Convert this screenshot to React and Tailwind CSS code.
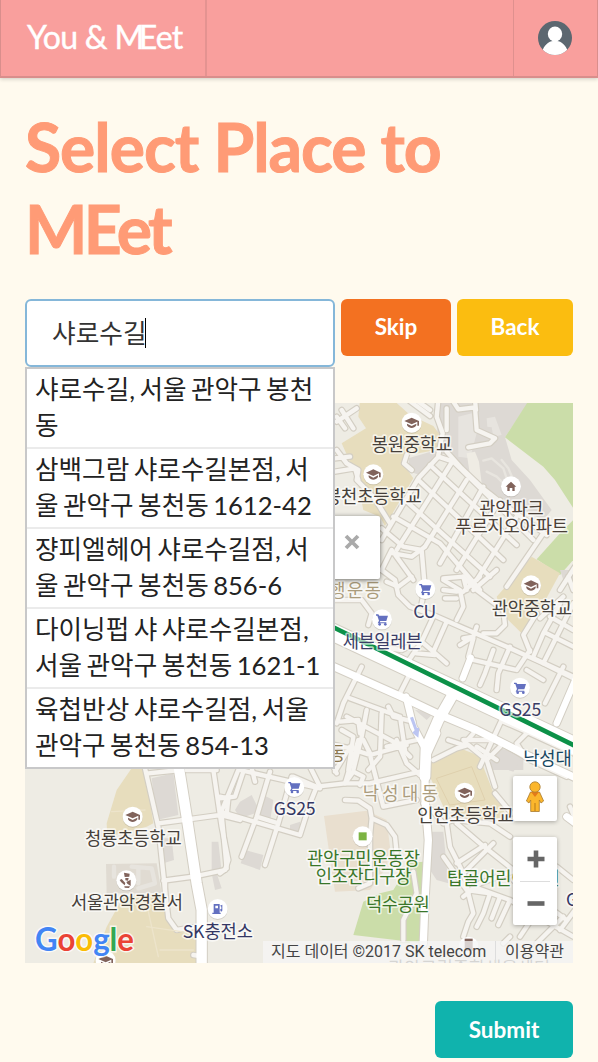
import React from "react";

const KR = '"Noto Sans CJK KR", sans-serif';

const suggestions = [
  ["샤로수길, 서울 관악구 봉천", "동"],
  ["삼백그람 샤로수길본점, 서", "울 관악구 봉천동 1612-42"],
  ["쟝피엘헤어 샤로수길점, 서", "울 관악구 봉천동 856-6"],
  ["다이닝펍 샤 샤로수길본점,", "서울 관악구 봉천동 1621-1"],
  ["육첩반상 샤로수길점, 서울", "관악구 봉천동 854-13"],
];

// Map tiles are drawn at three times their display size, each from its own origin.
const tiles = {
  north: "translate(330 400) scale(0.33333)",
  middle: "translate(330 570) scale(0.33333)",
  west: "translate(20 760) scale(0.33333)",
  south: "translate(220 740) scale(0.33333)",
  east: "translate(400 740) scale(0.33333)",
};

// [tile, fill, points]
const areas = [
  ["north", "#ddd9d4", "325,0 600,0 525,112 545,180 600,240 665,330 640,360 560,320 460,262 420,220 350,160 325,165 270,225 240,215 235,175 320,150"],
  ["north", "#e7e4df", "385,50 425,40 440,100 420,175 385,170"],
  ["north", "#efece4", "435,155 447,185 455,250 420,225 410,160"],
  ["north", "#e7e4df", "470,55 495,50 515,105 490,110 485,82 472,80"],
  ["north", "#cbdda9", "597,0 730,0 730,325 675,240 640,200 525,112"],
  ["north", "#cbdda9", "730,360 690,400 620,478 690,525 730,480"],
  ["north", "#e7ddbd", "90,0 190,0 240,45 310,78 330,105 320,150 235,165 222,195 250,235 165,378 150,350 100,330 80,230 35,130 108,85 85,50"],
  ["middle", "#e7ddbd", "605,-40 690,10 625,130 580,195 515,130 500,80"],
  ["middle", "#e7ddbd", "390,535 455,560 430,600 295,600 300,570"],
  ["middle", "#ddd9d4", "255,420 315,425 290,450"],
  ["middle", "#ddd9d4", "500,535 580,550 580,600 470,600"],
  ["middle", "#ddd9d4", "690,0 730,0 730,30 700,30"],
  ["west", "#e7ddbd", "335,25 375,25 400,190 380,200 262,230 260,190 290,90"],
  ["west", "#e0dbd2", "258,312 410,310 425,400 260,400"],
  ["west", "#e7ddbd", "310,410 430,400 455,500 530,520 530,610 220,610 260,500"],
  ["west", "#ddd9d4", "395,55 460,40 475,165 410,180"],
  ["west", "#ddd9d4", "425,235 455,235 462,300 435,308"],
  ["west", "#ddd9d4", "575,245 595,245 605,335 590,340 605,385 585,390 575,340"],
  ["south", "#e9dfcf", "312,228 440,212 500,240 510,320 500,380 450,450 345,455 335,390"],
  ["south", "#ddd9d4", "60,185 95,165 120,215 60,235 45,210"],
  ["south", "#ddd9d4", "130,165 160,180 150,245 118,235"],
  ["south", "#ddd9d4", "75,330 130,345 120,390 62,370"],
  ["south", "#ddd9d4", "210,255 240,245 240,280 210,275"],
  ["south", "#cbdda9", "480,460 520,450 570,370 610,370 610,610 400,585 430,485"],
  ["east", "#e7ddbd", "90,60 150,30 240,55 285,170 320,200 300,235 210,240 130,200 90,110"],
  ["east", "#ddd9d4", "300,25 370,45 340,95 280,75"],
  ["east", "#cbdda9", "20,370 70,365 60,500 30,610 0,610"],
  ["east", "#ddd9d4", "90,275 130,275 145,430 110,420 90,390"],
];

// [tile, path]
const lanes = [
  ["north", "M20,65L80,25M20,50L45,85M35,30L70,85M14,175L60,170M14,215L75,205L85,240M20,150L50,190L85,210L80,240L130,290L155,330L180,370"],
  ["north", "M235,0L300,48M265,5L300,30M325,0L320,50L338,100L325,165"],
  ["north", "M350,25L350,90M370,5L385,28L435,22L440,90L495,115L480,130L415,142M435,0L438,30"],
  ["north", "M230,165L222,190L245,210M325,170L265,235L155,420M350,155L395,205L455,262L510,305L650,405"],
  ["north", "M325,170L370,185L580,390L610,420M300,195L560,435M265,240L520,480M225,300L480,530M190,350L330,430L450,570"],
  ["north", "M370,180L200,450M410,240L285,440M460,260L330,490M510,300L380,510M560,350L440,540M640,400L530,560"],
  ["north", "M155,385L220,440L275,450L285,570M155,510L185,450L250,540M285,440L245,470L190,460"],
  ["north", "M340,535L400,530L410,570M735,500L690,570M715,530L730,570"],
  ["middle", "M14,90L95,90L125,130L115,165M155,0L195,30L205,75L240,110L310,135L390,170L530,230L640,280L730,325"],
  ["middle", "M245,20L205,50L170,35M285,50L275,100M340,30L390,60L400,110L380,150M340,60L380,65M345,85L380,85M400,20L440,60L520,120L525,165L500,190L460,190M450,20L400,65M500,0L430,60"],
  ["middle", "M400,205L430,200L440,170M390,225L430,200M430,205L415,260M490,240L465,310L450,345M540,230L505,310L500,360M600,240L560,300L430,270M610,265L730,320M620,130L580,195L600,245M730,100L640,280"],
  ["middle", "M660,140L730,180M650,190L730,230M690,100L640,190L610,260M630,145L700,80M590,300L640,330M700,290L645,400"],
  ["middle", "M265,215L215,240L180,235M310,140L275,215L230,280M275,215L310,245L350,280M350,155L310,245M260,250L315,255"],
  ["middle", "M80,320L40,400L20,460M95,290L80,320M60,385L210,440M50,440L200,520L240,560M175,410L190,440L250,455M210,440L225,540M110,420L95,500L70,600M155,430L150,560L115,600M30,455L85,450L90,490M35,480L70,500L55,600M170,530L260,510M235,320L210,370"],
  ["middle", "M355,510L400,525L430,490M440,530L500,570M450,590L515,450M600,480L560,520L585,560M520,455L600,490L730,550"],
  ["west", "M375,25L415,200L435,390L445,475L470,510L530,500M385,40L480,30M415,190L490,180L600,165L660,180M430,362L520,350L615,330L625,300L605,200L580,30M655,30L600,165M600,110L625,115L620,165"],
  ["west", "M435,365L435,400M520,585L550,590M500,30L590,30"],
  ["south", "M0,175L45,170L70,95M0,215L240,285L270,190L290,140L375,130L450,130L600,95M60,90L300,145M150,95L110,230L65,350M110,230L175,250L135,375M175,250L215,110M220,110L300,145"],
  ["south", "M95,85L105,125M5,225L20,385L0,400M270,80L300,140M345,15L390,25L450,45L560,15M415,0L375,130M450,45L490,200L590,180M375,130L400,95L430,110L420,135M325,50L350,100M450,40L430,0M530,0L560,70L600,105M345,95L390,20"],
  ["south", "M375,180L415,182L450,205L455,235L450,290L450,430L415,445M455,235L500,255L525,290L530,340M580,395L590,460L550,540L550,600"],
  ["east", "M100,60L170,25L205,15L260,60L285,140M190,0L290,0L390,60L500,110M285,160L335,220M260,60L300,20M70,190L100,215L130,250L160,240L270,250L330,290M140,250L150,320L190,400L220,520L205,545L190,590"],
  ["east", "M170,250L240,310L340,390M170,370L255,315M190,400L280,310M240,430L190,470M240,430L350,390M270,460L250,520L230,560M300,470L275,535M330,480L295,555M220,440L330,480L450,550L520,590M340,420L430,490L500,540M360,590L420,500M410,610L490,530M330,590L310,610M130,350L200,450L270,460"],
  ["east", "M480,570L540,490M510,200L540,270M470,380L520,420"],
];

const streets = [
  ["middle", 22, "M0,285L225,385L320,430L440,480L620,570"],
  ["middle", 20, "M228,380L250,470L285,535"],
  ["middle", 32, "M365,380L325,450L288,535L285,620"],
  ["middle", 19, "M422,263L398,325M738,325L680,460"],
  ["west", 31, "M476,20L500,170L530,370L545,450L545,610"],
  ["east", 22, "M110,-20L80,45L75,100L75,180L85,300L75,480L70,610"],
  ["east", 21, "M390,50L540,120M500,230L540,260"],
  ["middle", 51, "M-10,178L740,530"],
];

// [tile, x, baseline, width, colour, text]
const labels = [
  ["north", 125, 152, 242, "#453f3a", "봉원중학교"],
  ["north", -15, 308, 290, "#453f3a", "봉천초등학교"],
  ["north", 448, 344, 193, "#4b4037", "관악파크"],
  ["north", 376, 398, 338, "#4b4037", "푸르지오아파트"],
  ["middle", 485, 135, 241, "#453f3a", "관악중학교"],
  ["middle", -2, 82, 155, "#ab9c7c", "행 운 동"],
  ["middle", 250, 143, 69, "#3b3d66", "CU"],
  ["middle", 38, 234, 239, "#3b3d66", "세븐일레븐"],
  ["middle", 508, 437, 126, "#3b3d66", "GS25"],
  ["middle", 580, 585, 145, "#174660", "낙성대"],
  ["west", 195, 256, 290, "#453f3a", "청룡초등학교"],
  ["west", 153, 447, 336, "#453f3a", "서울관악경찰서"],
  ["west", 488, 533, 211, "#343763", "SK충전소"],
  ["south", 161, 226, 126, "#343763", "GS25"],
  ["south", 327, 60, 42, "#8d7951", "동"],
  ["south", 428, 180, 226, "#ab9c7c", "낙성대동"],
  ["south", 261, 374, 339, "#397629", "관악구민운동장"],
  ["south", 287, 428, 287, "#397629", "인조잔디구장"],
  ["south", 438, 514, 191, "#397629", "덕수공원"],
  ["east", 52, 246, 289, "#453f3a", "인헌초등학교"],
  ["east", 141, 434, 338, "#397629", "탑골어린이공원"],
  ["east", 498, 499, 126, "#343763", "GS25"],
];

function School() {
  return (
    <g fill="#81635b">
      <path d="M-22,-5L0,-15L22,-5L22,9L17,9L17,-3L0,5Z" />
      <path d="M-14,3L0,10L14,3L14,8C7,19-7,19-14,8Z" />
    </g>
  );
}

function Cart() {
  return (
    <g fill="#6370c0">
      <path d="M-18,-15H-11L-8,-11H18L13,5H-5L-7,9H13V12H-13L-9,4L-14,-11H-18Z" />
      <circle cx="-7" cy="15" r="4" />
      <circle cx="10" cy="15" r="4" />
    </g>
  );
}

function House() {
  return <path d="M-16,1L0,-14L16,1H11V14H4V5H-4V14H-11V1Z" fill="#81635b" />;
}

function Police() {
  return (
    <g fill="#81635b">
      <path d="M-7,-23L10,-20L9,-11L-5,-10Z" />
      <path d="M-3,-7L7,-7L5,1L-3,0ZM-20,-1L-14,-4L-3,8L-5,15L-16,5ZM0,5L13,-2L13,17L3,10ZM-6,18L11,18L8,23L-5,22Z" />
    </g>
  );
}

function Fuel() {
  return (
    <g fill="#6370c0">
      <path fillRule="evenodd" d="M-12,-15H6V11H9V15H-16V11H-12ZM-7,-10V-2H1V-10Z" />
      <path d="M7,-10L14,-13V4C14,9 8,9 8,4L8,0H11V-7Z" />
    </g>
  );
}

function Pitch() {
  return <path d="M-12,-12H12V12H-12Z" fill="#7cb342" />;
}

function Block() {
  return <path d="M-12,-24H12V12H-12Z" fill="#81635b" />;
}

const pins = [
  ["north", 245, 68, School],
  ["north", 130, 223, School],
  ["north", 543, 259, House],
  ["middle", 603, 46, School],
  ["middle", 286, 57, Cart],
  ["middle", 156, 148, Cart],
  ["middle", 570, 353, Cart],
  ["west", 338, 170, School],
  ["west", 319, 361, Police],
  ["west", 593, 447, Fuel],
  ["west", 257, 602, School],
  ["south", 223, 141, Cart],
  ["south", 428, 289, Pitch],
  ["east", 194, 158, School],
  ["east", 206, 620, Block],
];

function MapDrawing() {
  return (
    <svg className="block h-full w-full" viewBox="25 403 548 560">
      <defs>
        <filter id="pinShadow" x="-30%" y="-30%" width="160%" height="160%">
          <feDropShadow dx="0" dy="2" stdDeviation="2" floodColor="#6b6254" floodOpacity="0.35" />
        </filter>
      </defs>
      <rect x="25" y="403" width="548" height="560" fill="#eeece4" />
      {areas.map(([t, fill, points], i) => (
        <polygon key={i} transform={tiles[t]} fill={fill} points={points} />
      ))}
      <g fill="none" strokeLinecap="round" strokeLinejoin="round">
        <g stroke="#d3cec3">
          {lanes.map(([t, d], i) => (
            <path key={i} transform={tiles[t]} d={d} strokeWidth="20" />
          ))}
          {streets.map(([t, w, d], i) => (
            <path key={i} transform={tiles[t]} d={d} strokeWidth={w + 6} />
          ))}
        </g>
        <g stroke="#f6f4f0">
          {lanes.map(([t, d], i) => (
            <path key={i} transform={tiles[t]} d={d} strokeWidth="13" />
          ))}
        </g>
        <g stroke="#ffffff">
          {streets.map(([t, w, d], i) => (
            <path key={i} transform={tiles[t]} d={d} strokeWidth={w} />
          ))}
        </g>
        <path transform={tiles.north} d="M460,182L485,175L520,205L530,235M470,215L500,230L525,255L550,240L535,205L515,180" stroke="#e8e5df" strokeWidth="7" />
        <path transform={tiles.west} d="M282,320V350M335,320L395,325L405,370L355,385M355,325V370" stroke="#e7e4de" strokeWidth="13" />
        <path transform={tiles.west} d="M275,155L375,150M375,410L415,590M380,500L520,520M420,570L520,570" stroke="#ede4cb" strokeWidth="4" />
        <path transform={tiles.east} d="M110,115L215,80L255,180L150,195Z" stroke="#dfd0ad" strokeWidth="3" />
        <path transform={tiles.middle} d="M-10,162L740,530" stroke="#0c9148" strokeWidth="14" />
      </g>
      <path transform={tiles.middle} d="M240,443L249,440L261,474L268,473L265,503L247,488L254,481Z" fill="#bcc5f1" />
      {pins.map(([t, x, y, Glyph], i) => (
        <g key={i} transform={tiles[t]}>
          <g transform={`translate(${x} ${y})`}>
            <circle r="30" fill="#fff" filter="url(#pinShadow)" />
            <Glyph />
          </g>
        </g>
      ))}
      {labels.map(([t, x, y, w, color, text], i) => (
        <text
          key={i}
          transform={tiles[t]}
          x={x}
          y={y}
          textLength={w}
          fontSize="53"
          fontFamily={KR}
          fill={color}
          stroke="#ffffff"
          strokeOpacity="0.65"
          strokeWidth="10"
          strokeLinejoin="round"
          paintOrder="stroke"
        >
          {text}
        </text>
      ))}
      <text x="388" y="974" fontSize="17.5" textLength="162" fontFamily={KR} fill="#77736e">
        관악구립중학생을센터
      </text>
      <text x="35" y="951" textLength="99" lengthAdjust="spacingAndGlyphs" fontSize="33" fontWeight="700" fontFamily="Lato, sans-serif" stroke="#fff" strokeOpacity="0.75" strokeWidth="3" paintOrder="stroke">
        <tspan fill="#4285f4">G</tspan>
        <tspan fill="#ea4335">o</tspan>
        <tspan fill="#fbbc05">o</tspan>
        <tspan fill="#4285f4">g</tspan>
        <tspan fill="#34a853">l</tspan>
        <tspan fill="#ea4335">e</tspan>
      </text>
    </svg>
  );
}

function Pegman() {
  return (
    <svg className="h-[32px] w-[20px]" viewBox="0 0 20 32">
      <path d="M5.5,11H14.5L18.6,20L16,22L14.3,19V30.5H5.7V19L4,22L1.4,20Z" fill="#fbb62c" stroke="#a87a2d" strokeWidth="0.8" />
      <path d="M10,22V30" stroke="#b77a19" strokeWidth="1" />
      <path d="M6,11H14L10,16Z" fill="#e37b19" />
      <circle cx="10" cy="6" r="5.2" fill="#fbb62c" stroke="#a87a2d" strokeWidth="0.8" />
    </svg>
  );
}

function Header() {
  return (
    <header className="flex h-[78px] border-x border-b-2 border-[#d98e8c] bg-[#f99f9d] shadow-[0_1px_4px_rgba(34,36,38,0.22)]">
      <div className="flex w-[206px] items-center border-r-2 border-[#e49391] pl-[26px] font-['Lato'] text-[32px] leading-none text-white">
        <span className="whitespace-nowrap pb-[3px] tracking-[-0.7px] [-webkit-text-stroke:0.4px_white]">
          You &amp; <span className="tracking-[-5.5px]">M</span>Eet
        </span>
      </div>
      <div className="flex-1" />
      <div className="flex w-[84px] items-center justify-center border-l border-[#df908e] pr-[2px]">
        <svg className="h-[34px] w-[34px]" viewBox="0 0 34 34">
          <defs>
            <clipPath id="avatar">
              <circle cx="17" cy="17" r="17" />
            </clipPath>
          </defs>
          <g clipPath="url(#avatar)">
            <rect width="34" height="34" fill="#5c6770" />
            <ellipse cx="17" cy="13" rx="7.2" ry="7.4" fill="#fff" />
            <path d="M4,31C6,24 11,20 15,20V18H19V20C23,20 28,24 30,31V34H4Z" fill="#fff" />
          </g>
        </svg>
      </div>
    </header>
  );
}

export default function App() {
  return (
    <div className="flex h-[1062px] w-[598px] flex-col overflow-hidden bg-[#fffaee] font-['Lato','Noto_Sans_CJK_KR',sans-serif]">
      <Header />
      <main className="flex flex-col px-[25px]">
        <h1 className="mt-[28px] text-[66px] font-bold leading-[82px] tracking-[-1px] text-[#ff9b76] [-webkit-text-stroke:1px_#ff9b76]">
          Select Place to
          <br />
          <span className="tracking-[-3.6px]">MEet</span>
        </h1>
        <div className="relative mt-[29px] flex items-start gap-[6px]">
          <div className="flex h-[68px] w-[310px] items-center rounded-md border-2 border-[#85b7d9] bg-white pl-[25px] text-[25.7px] text-[#333]">
            <span className="leading-[30px]">샤로수길</span>
            <span className="-ml-[2px] h-[30px] w-px bg-black" />
          </div>
          <button className="h-[57px] w-[110px] rounded-md bg-[#f37121] pb-[2px] text-[22.5px] font-bold text-white">Skip</button>
          <button className="h-[57px] w-[116px] rounded-md bg-[#fbbd10] pb-[2px] text-[22.5px] font-bold text-white">Back</button>
          <ul className="absolute left-0 top-[68px] z-10 h-[402px] w-[310px] divide-y-2 divide-[#ebebeb] border-2 border-[#c8c8c9] bg-white text-[25.6px] leading-[36px] text-[#222] [word-spacing:-2.1px]">
            {suggestions.map(([a, b]) => (
              <li key={a} className="h-[80px] whitespace-nowrap pl-[8px] pt-[2px] last:h-[78px]">
                {a}
                <br />
                {b}
              </li>
            ))}
          </ul>
        </div>
        <section className="relative mt-[36px] h-[560px] overflow-hidden">
          <MapDrawing />
          <div className="absolute left-[100px] top-[113px] flex h-[63px] w-[255px] items-start justify-end rounded-[2px] bg-white pr-[20px] pt-[18px] shadow-[0_1px_5px_rgba(0,0,0,0.55)]">
            <svg className="h-[16px] w-[16px]" viewBox="0 0 16 16">
              <path d="M2,2L14,14M14,2L2,14" stroke="#aaa" strokeWidth="3.8" />
            </svg>
          </div>
          <div className="absolute right-[16px] top-[373px] flex h-[45px] w-[44px] items-center justify-center rounded-[2px] bg-white pb-[3px] shadow-[0_1px_4px_rgba(0,0,0,0.3)]">
            <Pegman />
          </div>
          <div className="absolute right-[16px] top-[434px] flex h-[88px] w-[44px] flex-col items-center rounded-[2px] bg-white shadow-[0_1px_4px_rgba(0,0,0,0.3)]">
            <svg className="h-[44px] w-[44px]" viewBox="0 0 44 44">
              <path d="M14.5,22H31.5M23,13.5V30.5" stroke="#666" strokeWidth="4.6" />
            </svg>
            <div className="h-px w-[30px] bg-[#ddd]" />
            <svg className="h-[43px] w-[44px]" viewBox="0 0 44 43">
              <path d="M14.5,21.5H31.5" stroke="#666" strokeWidth="4.6" />
            </svg>
          </div>
          <div className="absolute bottom-0 right-0 flex h-[22px] w-[310px] bg-[#f5f5f5]/75 font-['Roboto','Noto_Sans_CJK_KR',sans-serif] text-[16px] leading-[21px] text-[#444]">
            <span className="w-[233px] whitespace-nowrap border-r border-[#ddd] pl-[8px]">지도 데이터 ©2017 SK telecom</span>
            <span className="whitespace-nowrap pl-[9px]">이용약관</span>
          </div>
        </section>
        <button className="mt-[38px] h-[57px] w-[138px] self-end rounded-md bg-[#10b3ad] text-[22.5px] font-bold text-white">Submit</button>
      </main>
    </div>
  );
}
